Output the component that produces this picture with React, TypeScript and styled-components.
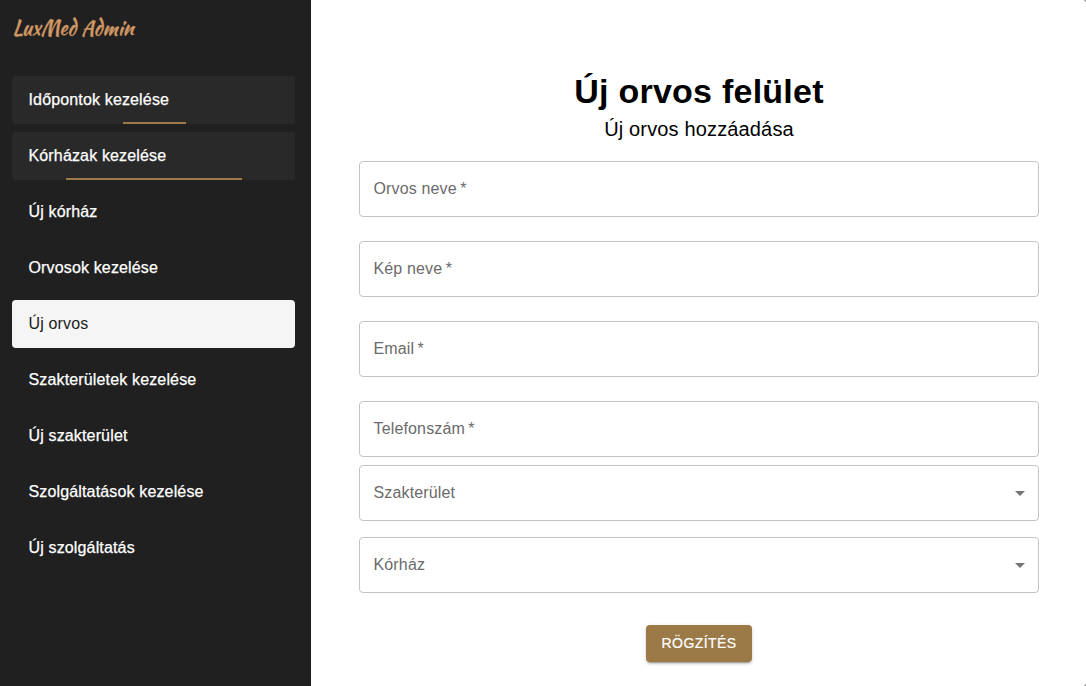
import React from 'react';
import styled, { createGlobalStyle } from 'styled-components';

const GlobalStyle = createGlobalStyle`
  *, *::before, *::after { box-sizing: border-box; }
  body {
    margin: 0;
    background: #fff;
    font-family: "Liberation Sans", Arial, sans-serif;
    overflow: hidden;
  }
`;

const Page = styled.div`
  display: flex;
  height: 100vh;
  position: relative;
`;

const Sidebar = styled.aside`
  flex: 0 0 311px;
  background: #202020;
  padding: 0 16px 0 12px;
  color: #fff;
`;

const Brand = styled.div`
  height: 76px;
  padding: 15px 0 0 0.5px;
`;

const BrandName = styled.span`
  display: inline-block;
  font-family: "Kaushan Script", cursive;
  font-weight: 400;
  font-size: 20px;
  line-height: 26px;
  letter-spacing: 0.2px;
  color: #cf9763;
  -webkit-text-stroke: 0.3px #cf9763;
  white-space: nowrap;
`;

const Nav = styled.nav`
  display: flex;
  flex-direction: column;
  gap: 8px;
`;

type ItemState = 'plain' | 'hovered' | 'active';

const NavItem = styled.a<{ $state: ItemState }>`
  display: flex;
  flex-direction: column;
  height: 48px;
  padding: 1px 16px 0 16.5px;
  border-radius: 4px;
  font-size: 16px;
  line-height: 45px;
  letter-spacing: 0.15px;
  color: ${(p) => (p.$state === 'active' ? '#202020' : '#fff')};
  -webkit-text-stroke: ${(p) => (p.$state === 'active' ? '0' : '0.25px #fff')};
  background: ${(p) =>
    p.$state === 'active' ? '#f5f5f5' : p.$state === 'hovered' ? '#292929' : 'transparent'};
`;

const Underline = styled.span<{ $start: number; $length: number }>`
  height: 2px;
  width: ${(p) => p.$length}px;
  margin-top: auto;
  margin-left: ${(p) => p.$start}px;
  background: #9c7a47;
`;

const Main = styled.main`
  flex: 1;
  display: flex;
  flex-direction: column;
  padding: 70px 47px 0 48px;
`;

const Title = styled.h1`
  margin: 0;
  font-size: 34px;
  line-height: 42px;
  letter-spacing: 0.25px;
  text-align: center;
  color: #000;
`;

const Subtitle = styled.p`
  margin: 0 0 15px;
  padding-top: 1px;
  font-size: 20px;
  line-height: 33px;
  letter-spacing: 0.15px;
  text-align: center;
  color: #000;
`;

const Form = styled.form`
  display: flex;
  flex-direction: column;
`;

const Field = styled.div<{ $gap: number }>`
  display: flex;
  align-items: center;
  justify-content: space-between;
  height: 56px;
  margin-bottom: ${(p) => p.$gap}px;
  padding: 0 6px 0 13.5px;
  border: 1px solid #c4c4c4;
  border-radius: 4px;
  font-size: 16px;
  letter-spacing: 0.15px;
  color: #6b6b6b;
`;

const Arrow = styled.svg`
  width: 24px;
  height: 24px;
  fill: #757575;
`;

const SubmitButton = styled.button`
  align-self: center;
  width: 106px;
  height: 37px;
  margin-top: 16px;
  padding: 0 0 1px;
  border: 0;
  border-radius: 4px;
  background: #9c7a47;
  box-shadow: 0 3px 1px -2px rgba(0, 0, 0, 0.2), 0 2px 2px 0 rgba(0, 0, 0, 0.14),
    0 1px 5px 0 rgba(0, 0, 0, 0.12);
  color: #fff;
  font: 500 14px "Liberation Sans", Arial, sans-serif;
  letter-spacing: 0.4px;
  -webkit-text-stroke: 0.2px #fff;
`;

const Corner = styled.span<{ $edge: 'top' | 'bottom' }>`
  position: absolute;
  right: 0;
  ${(p) => p.$edge}: 0;
  width: 2px;
  height: 2px;
  background: linear-gradient(
    to ${(p) => p.$edge} right,
    transparent 50%,
    #aaa9a6 50%
  );
`;

const navItems: { label: string; state?: ItemState; line?: [number, number] }[] = [
  { label: 'Időpontok kezelése', state: 'hovered', line: [94, 63] },
  { label: 'Kórházak kezelése', state: 'hovered', line: [37.5, 176] },
  { label: 'Új kórház' },
  { label: 'Orvosok kezelése' },
  { label: 'Új orvos', state: 'active' },
  { label: 'Szakterületek kezelése' },
  { label: 'Új szakterület' },
  { label: 'Szolgáltatások kezelése' },
  { label: 'Új szolgáltatás' },
];

const fields = [
  { label: 'Orvos neve\u2009*', gap: 24 },
  { label: 'Kép neve\u2009*', gap: 24 },
  { label: 'Email\u2009*', gap: 24 },
  { label: 'Telefonszám\u2009*', gap: 8 },
  { label: 'Szakterület', gap: 16, select: true },
  { label: 'Kórház', gap: 16, select: true },
];

export default function App() {
  return (
    <Page>
      <GlobalStyle />
      <Sidebar>
        <Brand>
          <BrandName>LuxMed Admin</BrandName>
        </Brand>
        <Nav>
          {navItems.map(({ label, state = 'plain', line }) => (
            <NavItem key={label} $state={state}>
              {label}
              {line && <Underline $start={line[0]} $length={line[1]} />}
            </NavItem>
          ))}
        </Nav>
      </Sidebar>
      <Main>
        <Title>Új orvos felület</Title>
        <Subtitle>Új orvos hozzáadása</Subtitle>
        <Form>
          {fields.map(({ label, gap, select }) => (
            <Field key={label} $gap={gap}>
              <span>{label}</span>
              {select && (
                <Arrow viewBox="0 0 24 24">
                  <path d="M7 10l5 5 5-5z" />
                </Arrow>
              )}
            </Field>
          ))}
          <SubmitButton type="button">RÖGZÍTÉS</SubmitButton>
        </Form>
      </Main>
      <Corner $edge="top" />
      <Corner $edge="bottom" />
    </Page>
  );
}
